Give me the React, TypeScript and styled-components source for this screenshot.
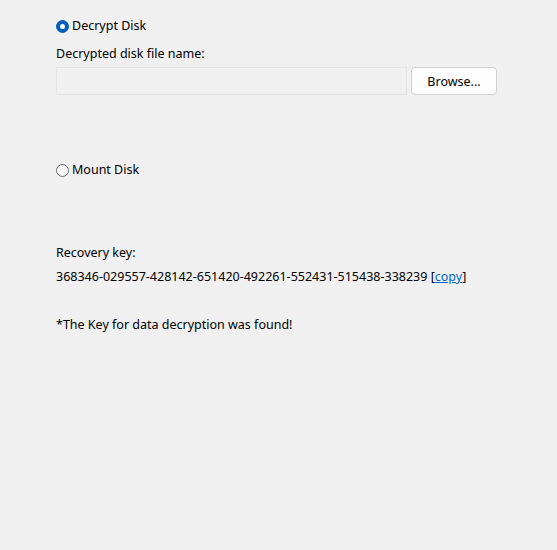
import React from "react";
import styled, { createGlobalStyle } from "styled-components";

const Global = createGlobalStyle`
  html, body {
    margin: 0;
    padding: 0;
    background: #f0f0f0;
  }
  body {
    font-family: "Noto Sans", "Open Sans", sans-serif;
    font-size: 12.5px;
    color: #000;
  }
`;

const Page = styled.div`
  width: 557px;
  height: 550px;
  box-sizing: border-box;
  padding: 17px 60px 0 56px;
  display: flex;
  flex-direction: column;
`;

const RadioRow = styled.label<{ $mt?: number }>`
  display: flex;
  align-items: center;
  gap: 3px;
  height: 18px;
  margin-top: ${(p) => p.$mt ?? 0}px;
  line-height: 18px;
`;

const RadioDot = styled.span<{ $checked?: boolean }>`
  width: 13px;
  height: 13px;
  box-sizing: border-box;
  border-radius: 50%;
  flex-shrink: 0;
  display: flex;
  align-items: center;
  justify-content: center;
  background: ${(p) => (p.$checked ? "#005fb8" : "#f7f7f7")};
  border: 1px solid ${(p) => (p.$checked ? "#005fb8" : "#6e6e6e")};
  &::after {
    content: "";
    display: ${(p) => (p.$checked ? "block" : "none")};
    width: 5px;
    height: 5px;
    border-radius: 50%;
    background: #fff;
  }
`;

const Label = styled.div<{ $mt?: number }>`
  margin-top: ${(p) => p.$mt ?? 0}px;
  line-height: 18px;
`;

const FileRow = styled.div`
  display: flex;
  gap: 4px;
  margin-top: 4px;
  height: 28px;
`;

const FileInput = styled.div`
  flex: 0 0 351px;
  box-sizing: border-box;
  border: 1px solid #e4e4e4;
  background: #f0f0f0;
`;

const Button = styled.button`
  width: 86px;
  height: 28px;
  box-sizing: border-box;
  background: #fdfdfd;
  border: 1px solid #d0d0d0;
  border-radius: 4px;
  font: inherit;
  color: #000;
  padding: 0;
`;

const Link = styled.a`
  color: #0066cc;
  text-decoration: underline;
`;

export default function App() {
  return (
    <>
      <Global />
      <Page>
        <RadioRow>
          <RadioDot $checked />
          Decrypt Disk
        </RadioRow>
        <Label $mt={10}>Decrypted disk file name:</Label>
        <FileRow>
          <FileInput />
          <Button>Browse...</Button>
        </FileRow>
        <RadioRow $mt={66}>
          <RadioDot />
          Mount Disk
        </RadioRow>
        <Label $mt={65}>Recovery key:</Label>
        <Label $mt={6}>
          368346-029557-428142-651420-492261-552431-515438-338239 [
          <Link>copy</Link>]
        </Label>
        <Label $mt={30}>*The Key for data decryption was found!</Label>
      </Page>
    </>
  );
}
